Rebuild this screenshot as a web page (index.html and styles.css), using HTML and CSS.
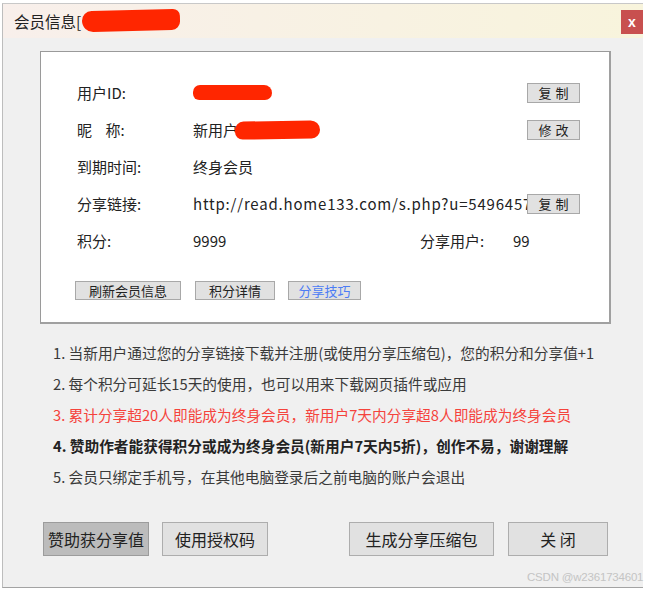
FILE: index.html
```html
<!DOCTYPE html>
<html lang="zh-CN">
<head>
<meta charset="utf-8">
<title>会员信息</title>
<link rel="stylesheet" href="styles.css">
</head>
<body>
<div class="dialog">
  <div class="titlebar">
    <div class="title">会员信息[<span class="redact redact-title"></span></div>
    <div class="close">x</div>
  </div>
  <div class="content">
    <div class="panel">
      <div class="row">
        <span class="label">用户ID:</span>
        <span class="value"><span class="redact redact-id"></span></span>
        <span class="sbtn">复制</span>
      </div>
      <div class="row">
        <span class="label">昵&nbsp;&nbsp;&nbsp;&nbsp;称:</span>
        <span class="value">新用户<span class="redact redact-nick"></span></span>
        <span class="sbtn">修改</span>
      </div>
      <div class="row">
        <span class="label">到期时间:</span>
        <span class="value">终身会员</span>
      </div>
      <div class="row">
        <span class="label">分享链接:</span>
        <span class="value url">http://read.home133.com/s.php?u=5496457</span>
        <span class="sbtn">复制</span>
      </div>
      <div class="row">
        <span class="label">积分:</span>
        <span class="value score">9999</span>
        <span class="label2">分享用户:</span>
        <span class="value">99</span>
      </div>
      <div class="actions">
        <span class="abtn a1">刷新会员信息</span>
        <span class="abtn a2">积分详情</span>
        <span class="abtn a3 blue">分享技巧</span>
      </div>
    </div>
    <ol class="notes">
      <li>1. 当新用户通过您的分享链接下载并注册(或使用分享压缩包)，您的积分和分享值+1</li>
      <li>2. 每个积分可延长15天的使用，也可以用来下载网页插件或应用</li>
      <li class="red">3. 累计分享超20人即能成为终身会员，新用户7天内分享超8人即能成为终身会员</li>
      <li class="bold">4. 赞助作者能获得积分或成为终身会员(新用户7天内5折)，创作不易，谢谢理解</li>
      <li>5. 会员只绑定手机号，在其他电脑登录后之前电脑的账户会退出</li>
    </ol>
    <div class="footer">
      <span class="btn pressed w1">赞助获分享值</span>
      <span class="btn w2">使用授权码</span>
      <span class="btn w3">生成分享压缩包</span>
      <span class="btn w4">关 闭</span>
    </div>
  </div>
</div>
<div class="watermark">CSDN @w2361734601</div>
</body>
</html>
```
FILE: styles.css
```css
html, body {
  margin: 0;
  padding: 0;
  background: #ffffff;
}
body {
  width: 668px;
  height: 591px;
  position: relative;
  overflow: hidden;
  font-family: "Noto Sans CJK SC", "Noto Sans", sans-serif;
  color: #222;
}
.dialog {
  box-sizing: border-box;
  margin: 3px 0 0 2px;
  width: 641px;
  height: 585px;
  background: #f0f0f0;
  border-left: 1px solid #bdbdbd;
  border-top: 1px solid #c8c8c8;
  border-bottom: 1px solid #a3a3a3;
  display: flex;
  flex-direction: column;
}
.titlebar {
  height: 34px;
  display: flex;
  justify-content: space-between;
  align-items: flex-start;
  background: linear-gradient(to right, #f8efeb, #f8f4dc);
}
.title {
  display: flex;
  align-items: center;
  height: 33px;
  padding-left: 11px;
  font-size: 15.5px;
  color: #222;
}
.redact {
  display: inline-block;
  background: #ff2600;
  border-radius: 12px;
}
.redact-title {
  width: 98px;
  height: 21px;
  margin-left: 1px;
  border-radius: 14px 10px 12px 16px;
  transform: rotate(-1.5deg);
}
.close {
  margin-top: 6px;
  width: 22px;
  height: 24px;
  background: #c8504f;
  color: #fff;
  font-weight: bold;
  font-size: 14px;
  font-family: "Liberation Sans", sans-serif;
  display: flex;
  align-items: center;
  justify-content: center;
}
.content {
  flex: 1;
  display: flex;
  flex-direction: column;
}
.panel {
  box-sizing: border-box;
  margin: 13px 0 0 37px;
  width: 571px;
  height: 273px;
  background: #fff;
  border-top: 1px solid #9a9a9a;
  border-left: 1px solid #9a9a9a;
  border-right: 2px solid #a0a0a0;
  border-bottom: 2px solid #a0a0a0;
  padding: 22px 29px 0 36px;
  font-size: 15px;
}
.row {
  height: 37px;
  display: flex;
  align-items: center;
}
.label {
  width: 116px;
  flex: none;
}
.value {
  flex: 1;
  white-space: nowrap;
  overflow: hidden;
  position: relative;
  display: flex;
  align-items: center;
}
.url {
  letter-spacing: 0.8px;
}
.score {
  flex: none;
  width: 227px;
}
.label2 {
  width: 93px;
  flex: none;
}
.redact-id {
  width: 79px;
  height: 15px;
  border-radius: 8px 9px 8px 7px;
}
.redact-nick {
  width: 85px;
  height: 18px;
  margin-left: -3px;
  border-radius: 9px 10px 9px 8px;
  transform: rotate(-1deg);
}
.sbtn {
  flex: none;
  box-sizing: border-box;
  width: 53px;
  height: 20px;
  background: #e1e1e1;
  border: 1px solid #a8a8a8;
  font-size: 13px;
  letter-spacing: 4px;
  padding-left: 4px;
  display: flex;
  align-items: center;
  justify-content: center;
  color: #222;
}
.actions {
  margin-top: 22px;
  display: flex;
}
.abtn {
  box-sizing: border-box;
  height: 19px;
  background: #e1e1e1;
  border: 1px solid #a8a8a8;
  font-size: 13px;
  display: flex;
  align-items: center;
  justify-content: center;
  white-space: nowrap;
  color: #222;
}
.a1 {
  width: 106px;
  margin-left: -2px;
}
.a2 {
  width: 80px;
  margin-left: 14px;
}
.a3 {
  width: 73px;
  margin-left: 13px;
}
.abtn.blue {
  color: #4c7cf5;
}
.notes {
  list-style: none;
  margin: 13px 0 0 50px;
  padding: 0;
  font-size: 14.7px;
  color: #3a3a3a;
}
.notes li {
  height: 31px;
  line-height: 31px;
  white-space: nowrap;
}
.notes .red {
  color: #f5433c;
}
.notes .bold {
  font-weight: bold;
  color: #222;
}
.footer {
  margin: 30px 0 0 40px;
  display: flex;
}
.btn {
  box-sizing: border-box;
  height: 34px;
  background: #e1e1e1;
  border: 1px solid #adadad;
  font-size: 16px;
  display: flex;
  align-items: center;
  justify-content: center;
  color: #222;
}
.btn.pressed {
  background: #bcbcbc;
  border-color: #9c9c9c;
}
.w1 { width: 106px; }
.w2 { width: 106px; margin-left: 13px; }
.w3 { width: 145px; margin-left: 81px; }
.w4 { width: 100px; margin-left: 14px; }
.watermark {
  position: absolute;
  left: 527px;
  top: 571px;
  font-size: 11.5px;
  letter-spacing: -0.2px;
  color: #c4c4c4;
  font-family: "Liberation Sans", sans-serif;
  white-space: nowrap;
}
```
